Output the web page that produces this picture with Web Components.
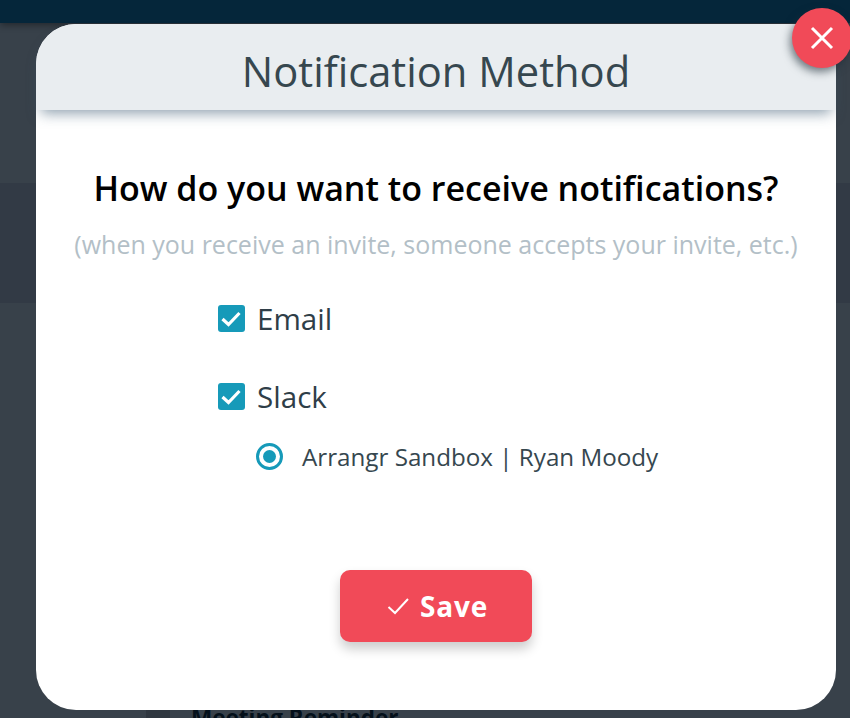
<!DOCTYPE html>
<html>
<head>
<meta charset="utf-8">
<title>Notification Method</title>
<style>
html, body { margin: 0; height: 718px; overflow: hidden; }
body { font-family: "Open Sans", "Noto Sans", "Liberation Sans", sans-serif; }
</style>
</head>
<body>
<app-backdrop>
  <notify-modal heading="Notification Method">
    <h-question slot="question">How do you want to receive notifications?</h-question>
    <span slot="hint">(when you receive an invite, someone accepts your invite, etc.)</span>
    <check-row>Email</check-row>
    <check-row>Slack</check-row>
    <radio-row>Arrangr Sandbox | Ryan Moody</radio-row>
    <save-button slot="footer">Save</save-button>
  </notify-modal>
</app-backdrop>
<script>
class AppBackdrop extends HTMLElement {
    constructor() {
        super();
        this.root = this.attachShadow({ mode: 'open' });
        this.root.innerHTML = `
        <style>
        :host { display: block; position: relative; width: 850px; height: 718px; overflow: hidden; background: #38414a; }
        .top { height: 23px; background: #05263a; box-shadow: 0 2px 7px rgba(0,0,0,.4); }
        .band { height: 120px; margin-top: 160px; background: #323a45; }
        .shade { position: absolute; left: 146px; top: 710px; width: 24px; height: 8px; background: #2f3740; }
        .peek {
            position: absolute; left: 191px; top: 705px;
            font: 700 22.5px/26px "Open Sans", sans-serif; color: #04101a;
        }
        .layer { position: absolute; inset: 0; }
        </style>
        <div class="top"></div>
        <div class="band"></div>
        <div class="shade"></div>
        <div class="peek">Meeting Reminder</div>
        <div class="layer"><slot></slot></div>
        `;
    }
}
customElements.define('app-backdrop', AppBackdrop);

class NotifyModal extends HTMLElement {
    constructor() {
        super();
        this.root = this.attachShadow({ mode: 'open' });
        this.root.innerHTML = `
        <style>
        :host { display: flex; flex-direction: column; position: absolute; left: 36px; top: 24px; width: 800px; height: 686px; background: #fff; border-radius: 40px; }
        header {
            flex: none; height: 86px; box-sizing: border-box; padding-top: 6px; display: flex; align-items: center; justify-content: center;
            background: #e9edf0; border-radius: 40px 40px 0 0; color: #36474f;
            font-size: 41.7px; font-weight: 400;
            box-shadow: 0 8px 14px -5px rgba(60,90,115,.6);
            position: relative;
        }
        .close {
            position: absolute; left: 756px; top: -16px; width: 60px; height: 60px; border-radius: 50%;
            background: #f14a58; box-shadow: -2px 4px 9px rgba(30,45,55,.6);
            display: flex; align-items: center; justify-content: center;
        }
        main { flex: 1; display: flex; flex-direction: column; align-items: center; padding-top: 56px; }
        .question { font-size: 34px; line-height: 44px; font-weight: 600; color: #000; white-space: nowrap; }
        .hint { font-size: 25px; line-height: 32px; margin-top: 18px; color: #b3bfc7; white-space: nowrap; }
        .options { align-self: flex-start; margin: 40px 0 0 182px; display: flex; flex-direction: column; }
        footer { flex: none; display: flex; justify-content: center; padding-bottom: 68px; }
        </style>
        <header>
          <span></span>
          <div class="close">
            <svg width="24" height="24" viewBox="0 0 24 24"><path d="M2 2 L22 22 M22 2 L2 22" stroke="#fff" stroke-width="3" fill="none"/></svg>
          </div>
        </header>
        <main>
          <div class="question"><slot name="question"></slot></div>
          <div class="hint"><slot name="hint"></slot></div>
          <div class="options"><slot></slot></div>
        </main>
        <footer><slot name="footer"></slot></footer>
        `;
    }
    connectedCallback() {
        this.root.querySelector('header span').textContent = this.getAttribute('heading');
    }
}
customElements.define('notify-modal', NotifyModal);

class HQuestion extends HTMLElement {
    constructor() {
        super();
        this.root = this.attachShadow({ mode: 'open' });
        this.root.innerHTML = `<style>:host { display: inline; }</style><slot></slot>`;
    }
}
customElements.define('h-question', HQuestion);

class CheckRow extends HTMLElement {
    constructor() {
        super();
        this.root = this.attachShadow({ mode: 'open' });
        this.root.innerHTML = `
        <style>
        :host { display: flex; align-items: center; height: 36px; margin-bottom: 42px; gap: 12px; font-size: 29.6px; color: #2f3e48; }
        .box { width: 27px; height: 27px; border-radius: 3px; background: #169ab9; display: flex; }
        </style>
        <div class="box">
          <svg width="27" height="27" viewBox="0 0 27 27"><path d="M4.5 14 L10.5 19.5 L21.5 8" stroke="#fff" stroke-width="3.2" fill="none"/></svg>
        </div>
        <slot></slot>
        `;
    }
}
customElements.define('check-row', CheckRow);

class RadioRow extends HTMLElement {
    constructor() {
        super();
        this.root = this.attachShadow({ mode: 'open' });
        this.root.innerHTML = `
        <style>
        :host { display: flex; align-items: center; height: 36px; margin: -18px 0 0 38px; gap: 19px; font-size: 24.2px; color: #36474f; white-space: nowrap; }
        .dot { width: 27px; height: 27px; box-sizing: border-box; border: 3px solid #169ab9; border-radius: 50%; display: flex; align-items: center; justify-content: center; }
        .dot::after { content: ""; width: 13px; height: 13px; border-radius: 50%; background: #169ab9; }
        </style>
        <div class="dot"></div>
        <slot></slot>
        `;
    }
}
customElements.define('radio-row', RadioRow);

class SaveButton extends HTMLElement {
    constructor() {
        super();
        this.root = this.attachShadow({ mode: 'open' });
        this.root.innerHTML = `
        <style>
        :host {
            display: flex; align-items: center; justify-content: center; gap: 11px;
            box-sizing: border-box; padding-left: 3px;
            width: 192px; height: 72px; border-radius: 10px; background: #f14a58;
            box-shadow: 0 7px 12px rgba(0,0,0,.2);
            color: #fff; font-size: 28px; font-weight: 700; letter-spacing: .8px;
        }
        </style>
        <svg width="22" height="18" viewBox="0 0 22 18"><path d="M1.5 10 L8 16 L21 2" stroke="#fff" stroke-width="2" fill="none"/></svg>
        <slot></slot>
        `;
    }
}
customElements.define('save-button', SaveButton);
</script>
</body>
</html>
